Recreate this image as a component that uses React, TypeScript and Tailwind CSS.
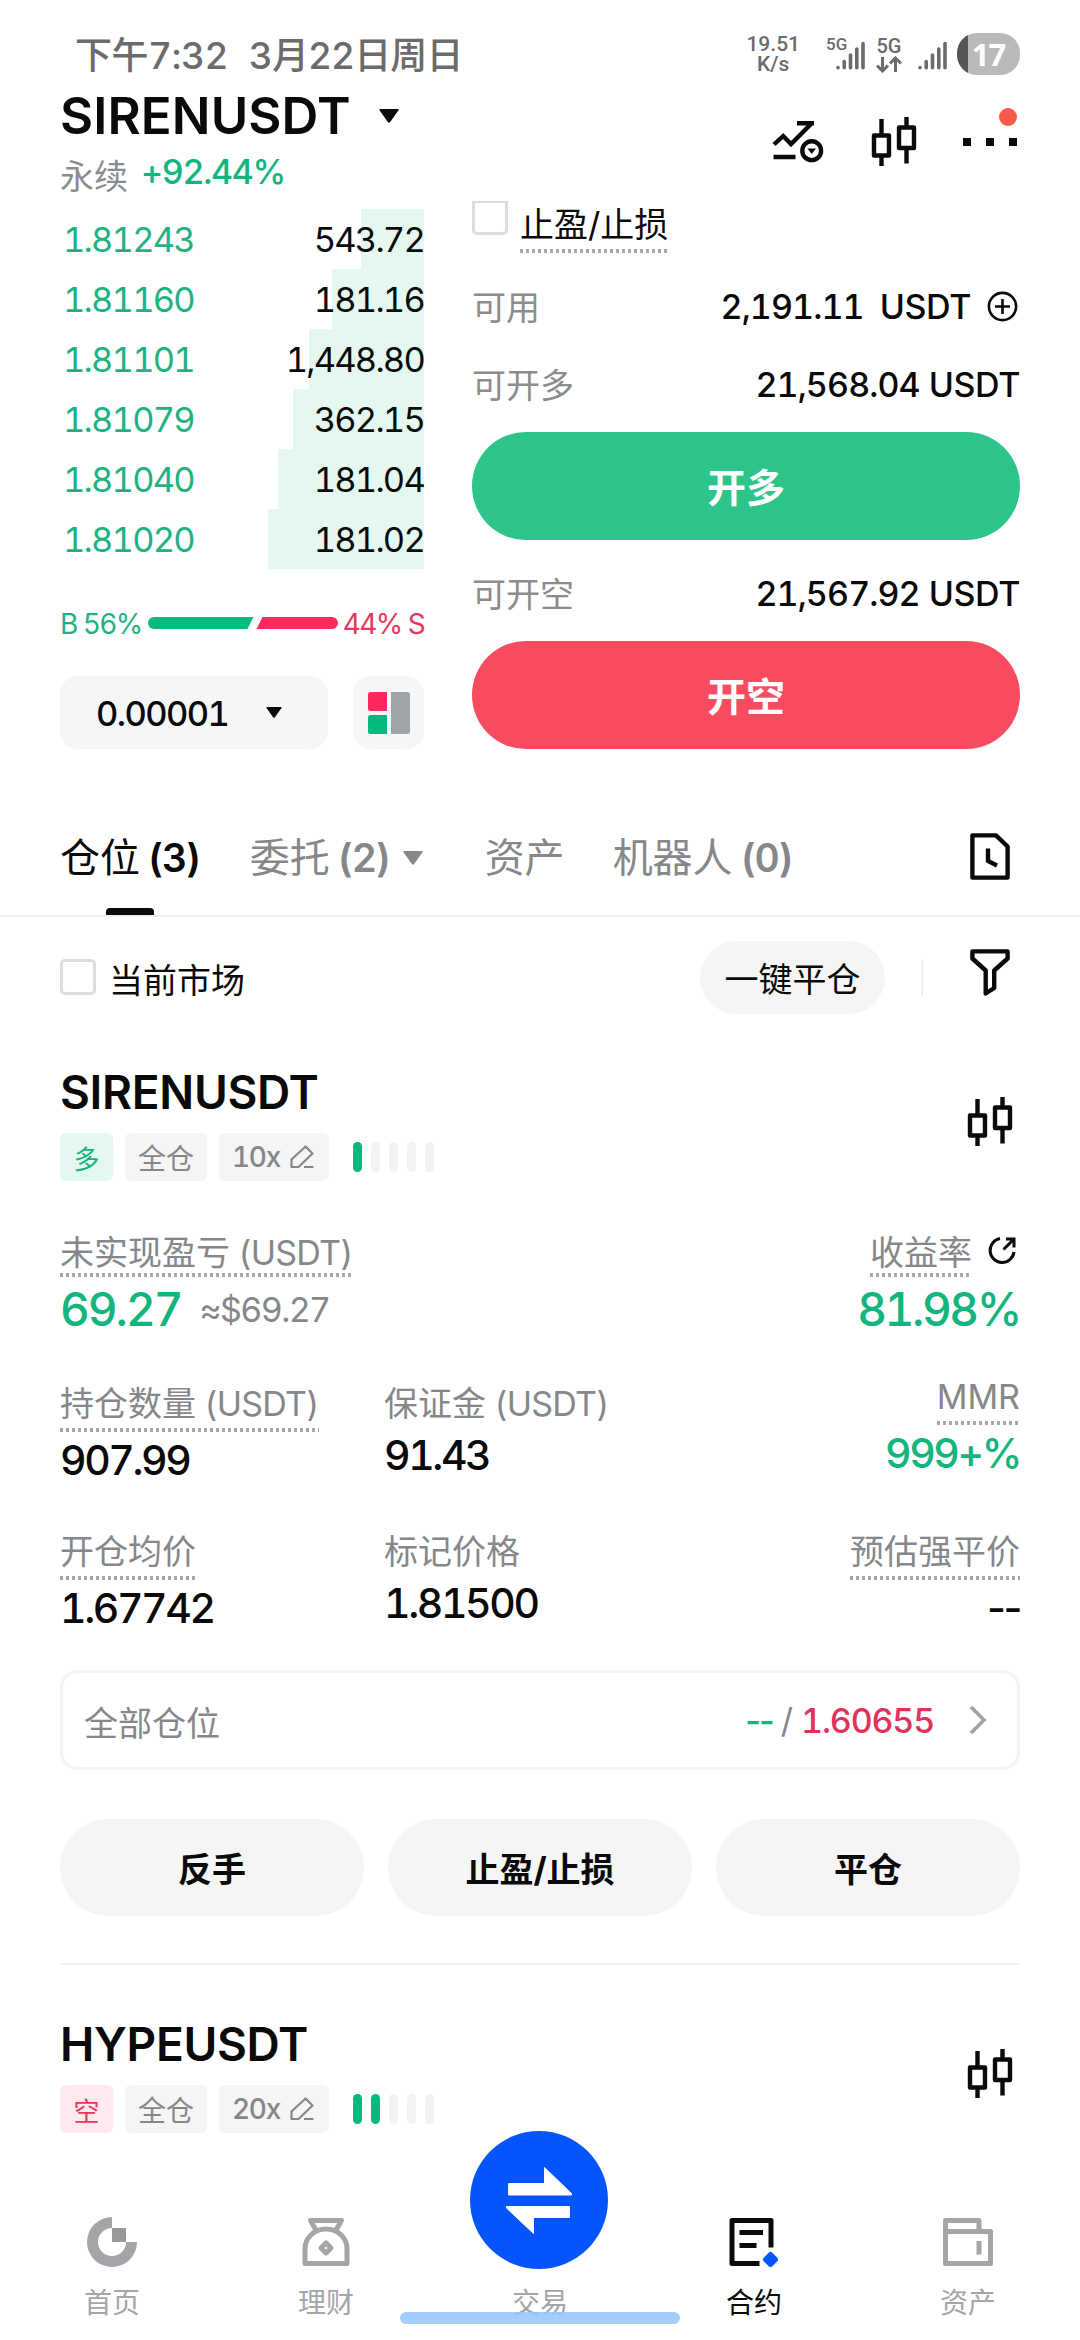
import { useState, type ReactNode } from "react";

const fontClass = "font-['Inter','Noto_Sans_CJK_SC',sans-serif]";

interface BookRow {
  price: string;
  amount: string;
  depth: number;
}

const bids: BookRow[] = [
  { price: "1.81243", amount: "543.72", depth: 63 },
  { price: "1.81160", amount: "181.16", depth: 92 },
  { price: "1.81101", amount: "1,448.80", depth: 115 },
  { price: "1.81079", amount: "362.15", depth: 131 },
  { price: "1.81040", amount: "181.04", depth: 146 },
  { price: "1.81020", amount: "181.02", depth: 156 },
];

function CandleIcon() {
  return (
    <svg width="46" height="51" viewBox="0 0 46 51" fill="none" stroke="#0a0a0a" strokeWidth="4.4" strokeLinejoin="round">
      <path d="M3 19.5h15v20H3zM10.5 3v16M10.5 40v10M28 11.5h15v20.5H28zM35.5 1v10M35.5 32v15.5" />
    </svg>
  );
}

function TrendIcon() {
  return (
    <svg width="52" height="44" viewBox="0 0 52 44" fill="none" stroke="#0a0a0a" strokeWidth="4.4">
      <path d="M2 24.5L11.2 16L19 24L39.5 3.5M25 3.3H42M1.5 37H23.5" />
      <circle cx="39.7" cy="30.7" r="9.4" />
      <path d="M35.5 28.5h8.5l-4.3 5.5z" fill="#0a0a0a" stroke="none" />
    </svg>
  );
}

function SignalIcon() {
  return (
    <svg width="29" height="29" viewBox="0 0 29 29" stroke="#6b6b6b" strokeWidth="3.6" strokeLinecap="round">
      <path d="M2 26.5v.2M8.2 20.5v6.3M14.5 14v12.8M20.8 8v18.8M27 2.5v24.3" />
    </svg>
  );
}

function PencilIcon() {
  return (
    <svg width="24" height="24" viewBox="0 0 24 24" fill="none" stroke="#85878a" strokeWidth="2.2" strokeLinejoin="round">
      <path d="M1.5 22v-7.5L15.5 1.5L22.5 8.5L8.5 22zM14 22h9.5" />
    </svg>
  );
}

function Caret({ className }: { className: string }) {
  return (
    <svg viewBox="0 0 20 14" className={className} fill="currentColor">
      <path d="M1 0H19Q20 .5 19.500 1.200L11 13.300Q10 14.200 9 13.300L.5 1.200Q0 .5 1 0Z" />
    </svg>
  );
}

function Dots() {
  return <div className="h-[4px] w-full bg-[repeating-linear-gradient(90deg,#a6a8aa_0_3px,transparent_3px_6px)]" />;
}

function StatusBar() {
  return (
    <div className="flex h-[86px] shrink-0 items-center justify-between pt-[22px] pr-[60px] pl-[75px] text-[#6b6b6b]">
      <div className="mt-1 flex gap-[21px] text-[37px] leading-[44px] font-medium tracking-[-0.5px]">
        <span>下午7:32</span>
        <span className="tracking-[-0.9px]">3月22日周日</span>
      </div>
      <div className="flex items-center font-['Roboto',sans-serif] font-medium">
        <div className="mr-[26px] text-center text-[21px] leading-[20px]">
          19.51
          <br />
          K/s
        </div>
        <div className="relative mr-[11px] pt-[2px] pl-[10px]">
          <span className="absolute -top-[5px] left-0 text-[17px] leading-[20px]">5G</span>
          <SignalIcon />
        </div>
        <div className="mr-[16px] flex flex-col items-center text-[20px] leading-[20px]">
          5G
          <svg width="26" height="17" viewBox="0 0 26 17" fill="none" stroke="#6b6b6b" strokeWidth="3">
            <path d="M6.5 1v14M1 9.5l5.5 5.5l5.5-5.5M19.5 16V2M14 7.5L19.5 2L25 7.5" />
          </svg>
        </div>
        <div className="mr-[10px] pt-[2px]">
          <SignalIcon />
        </div>
        <div className="flex h-[42px] w-[63px] items-center justify-center rounded-[20px] bg-[linear-gradient(90deg,#555_0_11px,#bababa_11px)] font-['Open_Sans',sans-serif] text-[31px] font-bold tracking-[-1px] text-white">
          17
        </div>
      </div>
    </div>
  );
}

function Header() {
  return (
    <header className="flex h-[115px] shrink-0 justify-between pr-[60px] pl-[60px]">
      <div className="pt-[7px]">
        <div className="flex h-[45px] items-center">
          <h1 className="text-[51px] leading-[45px] font-semibold tracking-[0.1px]">SIRENUSDT</h1>
          <Caret className="ml-[28px] h-[14px] w-[20px]" />
        </div>
        <div className="mt-[14px] flex items-start text-[34px] leading-[40px]">
          <span className="mt-[5px] text-[#8a8c8e]">永续</span>
          <span className="ml-[13px] font-medium tracking-[-1.3px] text-[#12b57e]">+92.44%</span>
        </div>
      </div>
      <div className="flex h-[111px] items-center">
        <TrendIcon />
        <div className="ml-[47px]">
          <CandleIcon />
        </div>
        <div className="relative ml-[46px] flex w-[57px] gap-[15px]">
          <i className="size-[8px] bg-[#0a0a0a]" />
          <i className="size-[8px] bg-[#0a0a0a]" />
          <i className="size-[8px] bg-[#0a0a0a]" />
          <i className="absolute -top-[30px] left-[36px] size-[18px] rounded-full bg-[#f95a4b]" />
        </div>
      </div>
    </header>
  );
}

function OrderBook() {
  return (
    <div className="w-[364px] pt-[8px]">
      {bids.map((row) => (
        <div key={row.price} className="relative flex h-[60px] items-center justify-between pt-[2px] text-[34.5px] tracking-[-1.8px]">
          <div className="absolute top-0 right-0 h-full bg-[#e4f8f0]" style={{ width: row.depth }} />
          <span className="relative pl-[3px] text-[#1fb281]">{row.price}</span>
          <span className="relative">{row.amount}</span>
        </div>
      ))}
      <div className="mt-[27px] flex h-[54px] items-center text-[28px] tracking-[-1.6px]">
        <span className="w-[88px] pt-px whitespace-nowrap text-[#1fb281]">B 56%</span>
        <svg width="190" height="12" viewBox="0 0 190 12">
          <path d="M6 0H105.5L99.5 12H6A6 6 0 0 1 6 0Z" fill="#06b97f" />
          <path d="M114.5 0H184A6 6 0 0 1 184 12H108.5Z" fill="#fd2b5b" />
        </svg>
        <span className="flex-1 pt-px text-right whitespace-nowrap text-[#e8375f]">44% S</span>
      </div>
      <div className="mt-[26px] flex h-[73px] justify-between">
        <button className="flex w-[268px] items-center rounded-[18px] bg-[#f5f6f7] pl-[36px] text-[34.5px] font-medium">
          <span className="w-[134px] pt-[2px] text-left tracking-[-1.6px]">0.00001</span>
          <Caret className="ml-[36px] h-[11px] w-[16px]" />
        </button>
        <button className="flex w-[71px] items-center justify-center rounded-[18px] bg-[#f5f6f7]">
          <svg width="42" height="42" viewBox="0 0 42 42">
            <path d="M2.5 0H19V19H2.5Q0 19 0 16.5V2.5Q0 0 2.5 0Z" fill="#fd2b5b" />
            <path d="M2.5 23H19V42H2.5Q0 42 0 39.5V25.5Q0 23 2.5 23Z" fill="#06b97f" />
            <path d="M23 0H39.5Q42 0 42 2.5V39.5Q42 42 39.5 42H23Z" fill="#a0a4a8" />
          </svg>
        </button>
      </div>
    </div>
  );
}

interface AvailableRowProps {
  label: string;
  value: string;
  gapClass?: string;
  children?: ReactNode;
}

function AvailableRow({ label, value, gapClass = "ml-[9px]", children }: AvailableRowProps) {
  return (
    <div className="flex h-[60px] items-center text-[34px]">
      <span className="flex-1 pt-[3px] text-[#8a8c8e]">{label}</span>
      <span className="font-medium tracking-[-0.9px]">{value}</span>
      <span className={`font-medium tracking-[-0.4px] ${gapClass}`}>USDT</span>
      {children}
    </div>
  );
}

function OrderForm() {
  const [tpsl, setTpsl] = useState(false);

  return (
    <div className="w-[548px]">
      <div className="flex h-[52px]">
        <button
          aria-pressed={tpsl}
          onClick={() => setTpsl((v) => !v)}
          className="h-[34px] w-[36px] rounded-b-[5px] border-[3px] border-t-2 border-[#dcdddd]"
        />
        <div className="ml-[12px] pt-[4px]">
          <div className="mb-[4px] h-[40px] text-[34px] leading-[40px]">止盈/止损</div>
          <Dots />
        </div>
      </div>
      <div className="mt-[23px]">
        <AvailableRow label="可用" value="2,191.11" gapClass="ml-[16px]">
          <svg width="31" height="31" viewBox="0 0 31 31" fill="none" stroke="#0a0a0a" strokeWidth="2.6" className="mr-[2px] ml-[16px]">
            <circle cx="15.5" cy="15.5" r="13.6" />
            <path d="M15.5 8v15M8 15.5h15" />
          </svg>
        </AvailableRow>
      </div>
      <div className="my-[18px]">
        <AvailableRow label="可开多" value="21,568.04" />
      </div>
      <button className="block h-[108px] w-full rounded-full bg-[#2cc488] pt-[5px] text-[39px] font-bold text-white">开多</button>
      <div className="mt-[23px] mb-[18px]">
        <AvailableRow label="可开空" value="21,567.92" />
      </div>
      <button className="block h-[108px] w-full rounded-full bg-[#f74c60] pt-[5px] text-[39px] font-bold text-white">开空</button>
    </div>
  );
}

function Count({ n }: { n: number }) {
  return <b className="ml-[8px] text-[39px] font-semibold tracking-[-1.3px]">({n})</b>;
}

function Tabs() {
  return (
    <div className="mt-[52px] flex h-[116px] shrink-0 items-center border-b-2 border-[#f0f1f1] px-[60px] text-[40px] text-[#85878a]">
      <div className="relative flex h-full items-center text-[#0a0a0a]">
        仓位
        <Count n={3} />
        <i className="absolute bottom-0 left-1/2 h-[7px] w-[48px] -translate-x-1/2 rounded-t-[4px] bg-[#0a0a0a]" />
      </div>
      <div className="ml-[50px] flex items-center">
        委托
        <Count n={2} />
        <Caret className="ml-[13px] h-[14px] w-[20px]" />
      </div>
      <div className="ml-[62px]">资产</div>
      <div className="ml-[48px] flex flex-1 items-center">
        机器人
        <Count n={0} />
      </div>
      <svg width="40" height="47" viewBox="0 0 40 47" fill="none" stroke="#0a0a0a" strokeWidth="4.4" strokeLinejoin="round" className="mr-[10px] -mt-[3px]">
        <path d="M2.4 2.4H26L37.6 13.5V44.6H2.4Z" />
        <path d="M18 15.5V28L27 32.5" strokeLinejoin="miter" />
      </svg>
    </div>
  );
}

function FilterRow() {
  const [current, setCurrent] = useState(false);

  return (
    <div className="flex h-[120px] shrink-0 items-center pr-[70px] pl-[60px] text-[34px]">
      <button
        aria-pressed={current}
        onClick={() => setCurrent((v) => !v)}
        className="size-[36px] rounded-[5px] border-[3px] border-[#dcdddd]"
      />
      <span className="ml-[13px] flex-1 pt-[6px]">当前市场</span>
      <button className="h-[73px] w-[185px] rounded-full bg-[#f5f5f5] pt-[4px]">一键平仓</button>
      <i className="mr-[47px] ml-[36px] h-[36px] w-[2px] bg-[#eeefef]" />
      <svg width="40" height="47" viewBox="0 0 40 47" fill="none" stroke="#0a0a0a" strokeWidth="4.4" strokeLinejoin="round" className="-mt-[9px]">
        <path d="M2.4 2.4H37.6V9.5L24.2 21.5V39L15.7 44.5V21.5L2.4 9.5Z" />
      </svg>
    </div>
  );
}

interface PositionHeadProps {
  symbol: string;
  short?: boolean;
  leverage: string;
  level: number;
}

function PositionHead({ symbol, short, leverage, level }: PositionHeadProps) {
  return (
    <div className="flex items-center justify-between pt-[27px] pr-[7px]">
      <div>
        <h2 className="h-[57px] text-[46px] leading-[57px] font-semibold tracking-[-0.3px]">{symbol}</h2>
        <div className="mt-[12px] flex h-[48px] items-center text-[28px] text-[#85878a]">
          <span
            className={`mr-[12px] flex h-full w-[53px] items-center justify-center rounded-[6px] pt-[4px] text-[26px] ${
              short ? "bg-[#fee9ee] text-[#e8375f]" : "bg-[#e4f8f0] text-[#12b57e]"
            }`}
          >
            {short ? "空" : "多"}
          </span>
          <span className="mr-[12px] flex h-full w-[82px] items-center justify-center rounded-[6px] bg-[#f5f5f5] pt-[4px]">全仓</span>
          <span className="mr-[24px] flex h-full w-[110px] items-center justify-between rounded-[6px] bg-[#f5f5f5] pr-[15px] pl-[13px] font-medium tracking-[-1.3px]">
            {leverage}
            <PencilIcon />
          </span>
          <div className="flex gap-[9px]">
            {[1, 2, 3, 4, 5].map((n) => (
              <i key={n} className={`h-[30px] w-[9px] rounded-full ${n <= level ? "bg-[#06b97f]" : "bg-[#f2f3f3]"}`} />
            ))}
          </div>
        </div>
      </div>
      <div className="-mt-[2px]">
        <CandleIcon />
      </div>
    </div>
  );
}

interface FieldProps {
  label: string;
  unit?: string;
  value: string;
  dotted?: boolean;
  className?: string;
}

function Unit({ children }: { children: ReactNode }) {
  return <span className="tracking-[-0.8px]"> ({children})</span>;
}

function Field({ label, unit, value, dotted, className = "" }: FieldProps) {
  return (
    <div className={`flex flex-col items-start ${className}`}>
      <div className="text-[34px] leading-[40px] text-[#85878a]">
        {label}
        {unit && <Unit>{unit}</Unit>}
        {dotted && (
          <div className="mt-[4px] mb-[7px]">
            <Dots />
          </div>
        )}
      </div>
      <div className={`text-[41px] leading-[42px] font-medium tracking-[-2.4px] ${dotted ? "" : "mt-[10px]"}`}>{value}</div>
    </div>
  );
}

function Position() {
  return (
    <section className="shrink-0 px-[60px]">
      <PositionHead symbol="SIRENUSDT" leverage="10x" level={1} />

      <div className="mt-[52px] flex h-[100px] justify-between">
        <div className="flex flex-col items-start">
          <div className="text-[34px] leading-[40px] text-[#85878a]">
            未实现盈亏
            <Unit>USDT</Unit>
            <Dots />
          </div>
          <div className="mt-[9px] flex items-center leading-[47px]">
            <span className="text-[46px] font-medium tracking-[-2px] text-[#12b57e]">69.27</span>
            <span className="ml-[18px] text-[34px] tracking-[-1.6px] text-[#85878a]">≈$69.27</span>
          </div>
        </div>
        <div className="flex flex-col items-end">
          <div className="flex">
            <div className="text-[34px] leading-[40px] text-[#85878a]">
              收益率
              <Dots />
            </div>
            <svg width="30" height="30" viewBox="0 0 30 30" fill="none" stroke="#0a0a0a" strokeWidth="3" className="mt-[3px] mr-[3px] ml-[15px]">
              <path d="M13 2.6A12 12 0 1 0 27 16" />
              <path d="M16.5 13.5L26.5 3.5M19 3H27V11.5" />
            </svg>
          </div>
          <div className="mt-[9px] text-[46px] leading-[47px] font-medium tracking-[-2.4px] text-[#12b57e]">81.98%</div>
        </div>
      </div>

      <div className="mt-[51px] flex h-[97px]">
        <Field label="持仓数量" unit="USDT" value="907.99" dotted className="w-[324px]" />
        <Field label="保证金" unit="USDT" value="91.43" className="flex-1" />
        <Field label="MMR" value="999+%" dotted className="-mt-[7px] items-end! [&>div:last-child]:text-[#12b57e]" />
      </div>

      <div className="mt-[51px] flex h-[97px]">
        <Field label="开仓均价" value="1.67742" dotted className="w-[324px]" />
        <Field label="标记价格" value="1.81500" className="flex-1" />
        <Field label="预估强平价" value="--" dotted className="items-end! normal-nums" />
      </div>

      <div className="mt-[41px] flex h-[100px] items-center rounded-[18px] border-[3px] border-[#f3f4f4] pr-[29px] pl-[21px] text-[34px] text-[#85878a]">
        <span className="flex-1 pt-[6px]">全部仓位</span>
        <span className="font-medium tracking-[-2px] text-[#12b57e] normal-nums">--</span>
        <span className="mx-[8px]">/</span>
        <span className="font-medium tracking-[-1.2px] text-[#e0325c]">1.60655</span>
        <svg width="20" height="30" viewBox="0 0 20 30" fill="none" stroke="#a0a2a4" strokeWidth="3.6" className="ml-[34px]">
          <path d="M3 2L16 15L3 28" />
        </svg>
      </div>

      <div className="mt-[49px] flex gap-[24px] text-[34px] font-bold">
        <button className="h-[97px] flex-1 rounded-full bg-[#f5f5f5] pt-[3px]">反手</button>
        <button className="h-[97px] flex-1 rounded-full bg-[#f5f5f5] pt-[3px]">止盈/止损</button>
        <button className="h-[97px] flex-1 rounded-full bg-[#f5f5f5] pt-[3px]">平仓</button>
      </div>
      <div className="mt-[47px] h-[2px] bg-[#f0f1f1]" />
    </section>
  );
}

function NavItem({ label, active, children }: { label: string; active?: boolean; children: ReactNode }) {
  return (
    <div className={`flex flex-1 flex-col items-center text-[28px] leading-[40px] ${active ? "text-[#0a0a0a]" : "text-[#a3a5a8]"}`}>
      <div className="mb-[16px] h-[50px]">{children}</div>
      {label}
    </div>
  );
}

function BottomNav() {
  return (
    <nav className="relative mt-auto flex h-[140px] shrink-0 px-[5px] pt-[17px]">
      <NavItem label="首页">
        <svg width="50" height="50" viewBox="0 0 50 50" fill="#a3a5a8">
          <path d="M25 0A25 25 0 1 0 50 25H39A14 14 0 1 1 25 11Z" />
          <path d="M25 11h14v14H25z" fill="#97999c" />
        </svg>
      </NavItem>
      <NavItem label="理财">
        <svg width="50" height="50" viewBox="0 0 50 50" fill="none" stroke="#a3a5a8" strokeWidth="5" strokeLinejoin="round">
          <path d="M4 46.5V31.5A21 19.5 0 0 1 46 31.5V46.5ZM15.5 14L9.5 3.5H40.5L34.5 14" />
          <path d="M25 26L30 31L25 36L20 31Z" />
        </svg>
      </NavItem>
      <NavItem label="交易">
        <div className="absolute -top-[69px] left-[470px] size-[138px] rounded-full bg-[#0555ff]">
          <svg width="138" height="138" viewBox="0 0 138 138" fill="#fff" stroke="#fff" strokeWidth="1" strokeLinejoin="round">
            <path d="M38.6 52.5H74.5V36.5L101.5 62.5V64H38.6Z" />
            <path d="M99.5 75.5H36.5V77L63.5 102.5V86.5H99.5Z" />
          </svg>
        </div>
      </NavItem>
      <NavItem label="合约" active>
        <svg width="50" height="50" viewBox="0 0 50 50" fill="none" stroke="#0a0a0a" strokeWidth="5" strokeLinejoin="round">
          <path d="M30.5 46.5H3V3.500H42V30.5M10.5 15.5H34M10.5 28.5H27.5" />
          <path d="M41.5 37.5L46.5 42.5L41.5 47.5L36.5 42.5Z" fill="#0555ff" stroke="#0555ff" />
        </svg>
      </NavItem>
      <NavItem label="资产">
        <svg width="50" height="50" viewBox="0 0 50 50" fill="none" stroke="#a3a5a8" strokeWidth="5" strokeLinejoin="round">
          <path d="M2.5 14.5V3.5H36V14M2.5 14.5H47.5V46.5H2.5ZM36 24V37.5" />
        </svg>
      </NavItem>
      <i className="absolute bottom-[16px] left-[400px] h-[12px] w-[280px] rounded-full bg-[#93c6fa]/85" />
    </nav>
  );
}

export default function App() {
  return (
    <div className={`flex h-[2340px] w-[1080px] flex-col overflow-hidden bg-white text-[#0a0a0a] tabular-nums ${fontClass}`}>
      <StatusBar />
      <Header />
      <main className="flex shrink-0 justify-between px-[60px]">
        <OrderBook />
        <OrderForm />
      </main>
      <Tabs />
      <FilterRow />
      <Position />
      <section className="mt-[24px] shrink-0 px-[60px]">
        <PositionHead symbol="HYPEUSDT" short leverage="20x" level={2} />
      </section>
      <BottomNav />
    </div>
  );
}
